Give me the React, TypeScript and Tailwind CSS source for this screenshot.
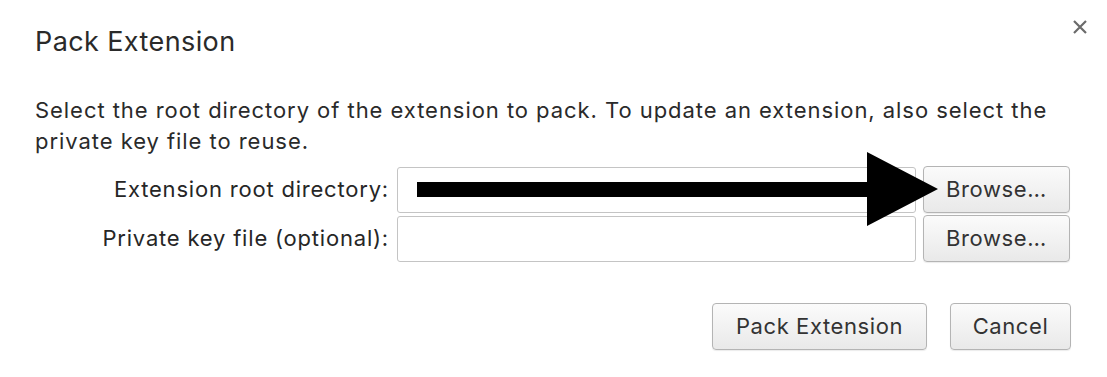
import React from "react";

const font = { fontFamily: "Inter, 'Liberation Sans', sans-serif" };

const Btn = ({ children, className = "" }: { children: React.ReactNode; className?: string }) => (
  <button
    className={`h-[47px] rounded-[4px] border border-[#b4b4b4] bg-gradient-to-b from-[#fbfbfb] to-[#e9e9e9] text-[22px] tracking-[0.6px] text-[#333] shadow-[0_1px_1px_rgba(0,0,0,0.08)] ${className}`}
  >
    {children}
  </button>
);

export default function App() {
  return (
    <div className="relative h-[377px] w-[1107px] overflow-hidden bg-white text-[#262626]" style={font}>
      <button className="absolute right-[19px] top-[19px] text-[#6b6b6b]">
        <svg width="16" height="16" viewBox="0 0 16 16">
          <path d="M2 2L14 14M14 2L2 14" stroke="currentColor" strokeWidth="2.2" />
        </svg>
      </button>

      <div className="px-[35px] pt-[24px]">
        <h1 className="text-[27px] leading-[36px] tracking-[0.4px] text-[#2a2a2a]">Pack Extension</h1>
        <p className="mt-[35px] whitespace-nowrap text-[22px] leading-[31px] tracking-[0.95px] text-[#2a2a2a]">
          Select the root directory of the extension to pack. To update an extension, also select the
          <br />
          private key file to reuse.
        </p>

        <div className="mt-[9px] grid grid-cols-[355px_519px_147px] items-center gap-x-[7px] gap-y-[2px] pr-[1px]">
          <label className="pr-[1px] text-right text-[22px] tracking-[0.8px]">Extension root directory:</label>
          <div className="h-[46px] rounded-[3px] border border-[#c4c4c4] bg-white" />
          <Btn className="h-[46px]">Browse…</Btn>

          <label className="pr-[1px] text-right text-[22px] tracking-[0.8px]">Private key file (optional):</label>
          <div className="h-[46px] rounded-[3px] border border-[#c4c4c4] bg-white" />
          <Btn className="h-[46px]">Browse…</Btn>
        </div>

        <div className="mt-[41px] flex justify-end gap-[23px] pr-[1px]">
          <Btn className="w-[215px]">Pack Extension</Btn>
          <Btn className="w-[121px]">Cancel</Btn>
        </div>
      </div>

      <svg className="absolute left-0 top-0" width="1107" height="377" viewBox="0 0 1107 377">
        <path d="M417 182H867V152L938 189L867 226V197H417Z" fill="#000" />
      </svg>
    </div>
  );
}
